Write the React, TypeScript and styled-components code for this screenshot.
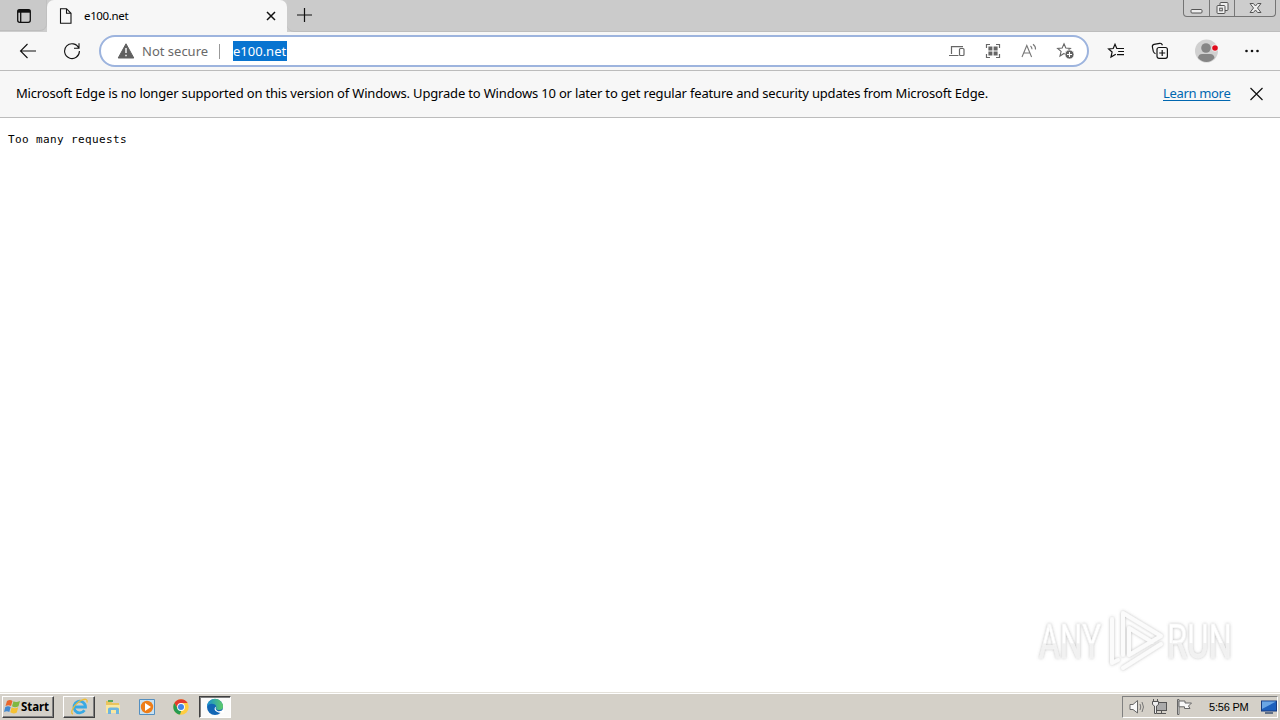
import React from "react";
import styled, { createGlobalStyle } from "styled-components";

const Global = createGlobalStyle`
  * { box-sizing: border-box; }
  html, body { margin: 0; padding: 0; overflow: hidden; }
  svg { display: block; flex: none; }
`;

const Screen = styled.div`
  width: 1280px; height: 720px; display: flex; flex-direction: column;
  background: #fff; color: #000; overflow: hidden;
  font-family: "Noto Sans", "Open Sans", sans-serif;
`;

const TabStrip = styled.div`
  height: 32px; flex: none; display: flex; background: #cdcdcd;
`;
const TabActions = styled.div`
  width: 47px; height: 31px; padding: 8px 0 0 16px; background: #c9c9c9;
  border-radius: 0 0 7px 0; border-right: 1px solid #c0c0c0; border-bottom: 1px solid #bdbdbd;
`;
const Tab = styled.div`
  width: 240px; height: 32px; display: flex; align-items: center; background: #f7f7f7;
  border-radius: 7px 7px 0 0; padding: 0 10px 0 11px;
`;
const Label = styled.span<{ $size: number; $spacing?: number; $color?: string }>`
  font-size: ${p => p.$size}px; letter-spacing: ${p => p.$spacing ?? 0}px;
  color: ${p => p.$color ?? "#000"}; white-space: nowrap; line-height: 18px;
`;
const TabTitle = styled(Label)` flex: 1; margin-left: 11px; `;
const SecurityLabel = styled(Label)` margin-left: 7px; width: 66px; `;
const StripRest = styled.div`
  flex: 1; height: 31.5px; display: flex; padding-left: 9px; align-items: center;
  border-bottom: 1px solid #bdbdbd; border-radius: 0 0 0 7px; background: #cbcbcb;
`;
const WindowButtons = styled.div`
  margin-left: auto; margin-right: 4px; align-self: flex-start; width: 93px; height: 17px; display: flex;
  border: 1px solid #747474; border-top: 0; border-radius: 0 0 4px 4px; background: #cdcdcd;
`;
const WindowButton = styled.div<{ $width: number }>`
  width: ${p => p.$width}px; display: flex; align-items: center; justify-content: center;
  & + & { border-left: 1px solid #777; }
`;

const Toolbar = styled.div`
  height: 39px; flex: none; display: flex; align-items: center; background: #f7f7f7;
  border-bottom: 1px solid #bcbcbc; padding-left: 19px;
`;
const NavButton = styled.div<{ $gap: number }>`
  width: 18px; margin-right: ${p => p.$gap}px;
`;
const AddressBar = styled.div`
  width: 990px; height: 32px; display: flex; align-items: center; background: #fff;
  border: 2px solid #9db4de; border-radius: 16px; padding: 0 12px 0 16px;
`;
const Divider = styled.i` width: 1px; height: 15px; background: #999; margin: 0 13px 0 11px; `;
const Selected = styled.span`
  height: 20px; width: 54px; background: #0874d0; display: flex; align-items: center;
`;
const AddressIcons = styled.div` margin-left: auto; display: flex; gap: 18px; align-items: center; `;
const ToolIcons = styled.div` display: flex; align-items: center; margin-left: 18px; `;
const ToolIcon = styled.div<{ $gap: number }>` margin-right: ${p => p.$gap}px; `;

const Notice = styled.div`
  height: 47px; flex: none; display: flex; align-items: center; background: #f7f7f7;
  border-bottom: 1px solid #bcbcbc; padding: 0 17px 0 16px;
`;
const NoticeText = styled(Label)` padding-bottom: 2px; `;
const Link = styled.a`
  margin-left: auto; margin-right: 20px; font-size: 13px; line-height: 18px; color: #0067b0; padding-bottom: 2px;
  width: 67px; white-space: nowrap; letter-spacing: -0.33px; text-decoration: underline; text-underline-offset: 2px;
`;
const Page = styled.main`
  flex: 1; display: flex; flex-direction: column; padding: 14px 8px 0;
`;
const Pre = styled.pre`
  margin: 0; font: 11px/16px "DejaVu Sans Mono", monospace; letter-spacing: 0.38px;
`;
const Watermark = styled.div` margin: auto 22px 16px auto; `;

const Taskbar = styled.footer`
  height: 28px; flex: none; display: flex; align-items: center; background: #d4d0c8;
  border-top: 1px solid #e4e1da; box-shadow: inset 0 1px #fff; padding: 1px 2px 0;
`;
const TaskButton = styled.div<{ $width: number; $kind?: "raised" | "pressed"; $gap?: number }>`
  width: ${p => p.$width}px; height: 22px; margin-left: ${p => p.$gap ?? 0}px;
  display: flex; align-items: center; justify-content: center;
  background: ${p => (p.$kind === "pressed" ? "#fbfbfa" : "#d4d0c8")};
  border: ${p => (p.$kind ? "1px solid" : "0")};
  border-color: ${p => (p.$kind === "pressed" ? "#404040 #fff #fff #404040" : "#fff #404040 #404040 #fff")};
  box-shadow: ${p => p.$kind === "raised" ? "inset -1px -1px #808080" : p.$kind === "pressed" ? "inset 1px 1px #808080" : "none"};
`;
const StartText = styled.b`
  font: bold 11.5px/16px "Noto Sans", sans-serif; letter-spacing: -0.1px; width: 31px; padding-bottom: 1px;
`;
const Tray = styled.div`
  margin-left: auto; width: 156px; height: 22px; display: flex; align-items: center; padding: 0 3px 0 5px;
  border: 1px solid; border-color: #808080 #fff #fff #808080;
`;
const Clock = styled.span`
  margin: 0 11px 0 15px; width: 40px; white-space: nowrap; font: 11px/16px "Liberation Sans", sans-serif; letter-spacing: -0.2px;
`;

const Star = "M8 1.8 9.8 6 14.4 6.4 10.9 9.4 12 14 8 11.5 4 14 5.1 9.4 1.6 6.4 6.2 6Z";

const Stroke = ({ d, w = 16, h = 16, c = "#111", s = 1.2 }: { d: string; w?: number; h?: number; c?: string; s?: number }) => (
  <svg width={w} height={h} viewBox={`0 0 ${w} ${h}`} fill="none" stroke={c} strokeWidth={s}><path d={d} /></svg>
);

const AnyRunMark = () => (
  <svg width="216" height="72" viewBox="0 0 216 72">
    <defs>
      <linearGradient id="fade" x1="0" y1="0" x2="0" y2="1">
        <stop offset="0.53" stopColor="#fff" /><stop offset="0.54" stopColor="#f1f1f1" />
      </linearGradient>
      <filter id="soft" x="-10%" y="-10%" width="120%" height="120%">
        <feDropShadow dx="0" dy="0" stdDeviation="1.8" floodColor="#777" floodOpacity="0.5" />
      </filter>
    </defs>
    <g filter="url(#soft)" fill="url(#fade)" stroke="#f4f4f4" strokeWidth="0.6" fontFamily="Roboto, sans-serif" fontSize="49">
      <text transform="translate(5 54) scale(0.65 1)">ANY</text>
      <text transform="translate(133 54) scale(0.67 1)">RUN</text>
    </g>
    <g filter="url(#soft)" fill="none" stroke="#fbfbfb" strokeWidth="4" strokeLinejoin="round" strokeLinecap="round">
      <path d="M89 51V9L127 32 95 51V24L118 38M78 15V59L84 56M89 64 127 40" />
    </g>
  </svg>
);

export default function App() {
  return (
    <Screen>
      <Global />
      <TabStrip>
        <TabActions>
          <svg width="16" height="16" viewBox="0 0 16 16" fill="none" stroke="#111" strokeWidth="1.3">
            <rect x="1.7" y="1.7" width="12.6" height="12.6" rx="2" /><path d="M1.7 3.2h12.6" strokeWidth="3" /><path d="M4.7 4v10" />
          </svg>
        </TabActions>
        <Tab>
          <Stroke w={15} d="M2.5 .7H8.5L13 5.3V15.3H2.5ZM8.5 .7V5.3H13" s={1.1} />
          <TabTitle $size={11.5} $spacing={-0.35}>e100.net</TabTitle>
          <Stroke w={12} h={12} d="M2 2 10 10M10 2 2 10" s={1.5} />
        </Tab>
        <StripRest>
          <Stroke d="M8.5 1V15M1 8H16" s={1.2} />
          <WindowButtons>
            <WindowButton $width={25}>
              <svg width="13" height="14"><rect x="1" y="8.5" width="11" height="3.5" rx="1" fill="#eee" stroke="#555" /></svg>
            </WindowButton>
            <WindowButton $width={25}>
              <svg width="13" height="14" fill="#eee" stroke="#555"><rect x="4" y="1.5" width="8" height="8" rx="1" /><rect x="1" y="4.5" width="8" height="8" rx="1" /><rect x="3.7" y="7.2" width="2.6" height="2.6" /></svg>
            </WindowButton>
            <WindowButton $width={41}>
              <svg width="13" height="14"><path d="M1 2.5h3.4L6.5 5 8.6 2.5H12L8.5 7 12 11.5H8.6L6.5 9 4.4 11.5H1L4.5 7Z" fill="#eee" stroke="#555" /></svg>
            </WindowButton>
          </WindowButtons>
        </StripRest>
      </TabStrip>

      <Toolbar>
        <NavButton $gap={26}><Stroke w={18} h={18} d="M17 9H1.5M8.5 2 1.5 9 8.5 16" s={1.1} /></NavButton>
        <NavButton $gap={18}><Stroke w={18} h={18} d="M15.8 6.2A7.4 7.4 0 1 0 16.4 9M16 1.3V6.3H11" s={1.1} /></NavButton>
        <AddressBar>
          <svg width="18" height="16" viewBox="0 0 18 16"><path d="M9 .8 16.8 15H1.2Z" fill="#606060" stroke="#606060" strokeLinejoin="round" /><path d="M9 5v5M9 11.7v1.6" stroke="#fff" strokeWidth="1.4" /></svg>
          <SecurityLabel $size={13} $color="#696969">Not secure</SecurityLabel>
          <Divider />
          <Selected><Label $size={13} $color="#fff">e100.net</Label></Selected>
          <AddressIcons>
            <svg width="18" height="16" fill="none" stroke="#666" strokeWidth="1.2"><path d="M3.5 11V3.6H15M1 12.5H10.5" /><rect x="11.5" y="5.5" width="4.5" height="7" rx="1" /></svg>
            <svg width="18" height="16" fill="none" stroke="#666" strokeWidth="1.2"><path d="M2.5 5V1.5H6M12 1.5H15.5V5M15.5 11V14.5H12M6 14.5H2.5V11" /><path d="M4.4 3.4h4v4H4.4zM9.6 3.4h4v4H9.6zM4.4 8.6h4v4H4.4zM9.6 8.6h4v4H9.6z" fill="#666" stroke="none" /></svg>
            <svg width="18" height="16" fill="none" stroke="#777" strokeWidth="1.1"><path d="M2 14 6.8 2.5 11.6 14M3.6 10H10M10.5 3Q12 4.3 12 6.2M13 1.2Q15.8 3.3 15.5 6.5" /></svg>
            <svg width="19" height="18" viewBox="0 0 19 18" fill="none" stroke="#666" strokeWidth="1.1"><path d={Star} /><circle cx="13.5" cy="12.5" r="4.5" fill="#606060" stroke="#fff" strokeWidth=".7" /><path d="M11 12.5h5M13.5 10v5" stroke="#fff" /></svg>
          </AddressIcons>
        </AddressBar>
        <ToolIcons>
          <ToolIcon $gap={26}>
            <svg width="18" height="18" viewBox="0 0 18 18" fill="none" stroke="#111" strokeWidth="1.2"><path d="M8.8 12.2 4 15 5.1 10 1.6 7 6.2 6.5 8 2.3 9.8 6.5H17M11.2 9.5H17M10 12.6H17" /></svg>
          </ToolIcon>
          <ToolIcon $gap={25}>
            <svg width="18" height="18" viewBox="0 0 18 18" fill="none" stroke="#111" strokeWidth="1.2"><path d="M4.5 11.8Q2.8 11 2.3 9.4L1.4 5Q1 3 3 2.4L8.7 1.3Q10.6 1 11.5 3.2" /><rect x="6" y="5.5" width="10.4" height="10.8" rx="2" /><path d="M11.2 8v6M8.2 11h6" /></svg>
          </ToolIcon>
          <ToolIcon $gap={24}>
            <svg width="26" height="24" viewBox="0 0 26 24"><circle cx="12.5" cy="12" r="11.5" fill="#d0d0d0" /><circle cx="12" cy="9" r="4.8" fill="#858585" /><path d="M4 19Q4.5 15.2 8 15H16Q20 15.2 20.5 19Q17 23 12.5 23T4 19" fill="#858585" /><circle cx="21" cy="9" r="3.4" fill="#f7f7f7" /><circle cx="21" cy="9" r="2.8" fill="#e00b1c" /></svg>
          </ToolIcon>
          <svg width="16" height="6" fill="#111"><circle cx="2.5" cy="3" r="1.3" /><circle cx="8" cy="3" r="1.3" /><circle cx="13.5" cy="3" r="1.3" /></svg>
        </ToolIcons>
      </Toolbar>

      <Notice>
        <NoticeText $size={13} $spacing={-0.175}>Microsoft Edge is no longer supported on this version of Windows. Upgrade to Windows 10 or later to get regular feature and security updates from Microsoft Edge.</NoticeText>
        <Link>Learn more</Link>
        <Stroke w={13} h={14} d="M.5 1 12.5 13M12.5 1 .5 13" s={1.2} />
      </Notice>

      <Page>
        <Pre>Too many requests</Pre>
        <Watermark><AnyRunMark /></Watermark>
      </Page>

      <Taskbar>
        <TaskButton $width={52} $kind="raised">
          <svg width="17" height="16" viewBox="0 0 17 16"><path d="M3 2Q6 0 8.5 2L7 7Q4.5 5.5 1.5 7Z" fill="#e9672c" /><path d="M9.5 2.3Q12 4 16 2L14.5 7.3Q11 9 8 7.3Z" fill="#7fb842" /><path d="M1.3 8Q4 6.5 6.7 8L5.3 13Q3 11.5 0 13Z" fill="#4289d0" /><path d="M7.7 8.3Q10.5 10 14.2 8.3L12.8 13.5Q9.5 15.5 6.3 13.3Z" fill="#f5c132" /></svg>
          <StartText>Start</StartText>
        </TaskButton>
        <TaskButton $width={32} $kind="raised" $gap={9}>
          <svg width="19" height="18" viewBox="0 0 19 18" fill="none"><path d="M14.5 12.3A5.8 5.8 0 1 1 15.5 9H5" stroke="#38a9e4" strokeWidth="2.8" /><path d="M3 16C-1 15 5 5 12 2Q18-.3 17 4.5" stroke="#efbd35" strokeWidth="1.3" /></svg>
        </TaskButton>
        <TaskButton $width={32} $gap={2}>
          <svg width="18" height="18" viewBox="0 0 18 18"><path d="M2 3H7L8 5H15V15H2Z" fill="#e9c45d" /><path d="M4 2h5v2H4z" fill="#57a85c" /><path d="M2 7H16V15H2Z" fill="#f9e7a0" /><path d="M4 16V11Q4 9.5 6 9.5H13Q15 9.5 15 11V16H12V12H7V16Z" fill="#6db5df" /></svg>
        </TaskButton>
        <TaskButton $width={32} $gap={2}>
          <svg width="18" height="18" viewBox="0 0 18 18"><path d="M1.5 1.5H16.5V16.5H1.5Z" fill="#c8e1f2" stroke="#548fc0" /><circle cx="9" cy="9" r="6.2" fill="#ee7d18" /><path d="M7 5 13 9 7 13Z" fill="#fff" /></svg>
        </TaskButton>
        <TaskButton $width={32} $gap={2}>
          <svg width="18" height="18" viewBox="0 0 18 18"><circle cx="9" cy="9" r="7.7" fill="#ffcd40" /><path d="M2.3 5.1A7.7 7.7 0 0 1 15.7 5.1H9L6 11Z" fill="#e33b2e" /><path d="M2.3 5.1 6 11H9.8L8 16.6A7.7 7.7 0 0 1 2.3 5.1" fill="#269b51" /><circle cx="9" cy="9" r="3.9" fill="#fff" /><circle cx="9" cy="9" r="3" fill="#4285e8" /></svg>
        </TaskButton>
        <TaskButton $width={32} $kind="pressed" $gap={2}>
          <svg width="18" height="18" viewBox="0 0 18 18">
            <defs><linearGradient id="wave" x1="0" y1="0" x2="1" y2="0"><stop stopColor="#1890d4" /><stop offset="1" stopColor="#5dcc66" /></linearGradient></defs>
            <circle cx="9" cy="9" r="8" fill="#1266b5" /><path d="M1 9A8 8 0 0 1 17 8.5Q17 12 13 12 9.5 12 10.3 9.8 10.8 7 7.5 6 3 5 1 9" fill="url(#wave)" /><path d="M10.3 8.5Q8.5 11 11.5 13 14 14 18 11.5V15L15 15Q9 14 8.5 11 8.5 9 10.3 8.5" fill="#fff" />
          </svg>
        </TaskButton>
        <Tray>
          <svg width="20" height="18" viewBox="0 0 20 18" fill="#f8f8f8" stroke="#666"><path d="M2 6.5H5L9.5 2.5V15L5 11.5H2Z" /><path d="M12 6Q13.5 9 12 12M14 4Q17 9 14 14" fill="none" stroke="#777" /></svg>
          <svg width="26" height="18" viewBox="0 0 26 18" fill="#eee" stroke="#555"><rect x="8.5" y="4.5" width="10" height="8" fill="#aaa" /><path d="M9 15.5H18M13.5 12.5V15" /><path d="M5.5 1V3M9.5 1V3M4.5 3.5H10.5V6.5L8.5 8V15.5H6.5V8L4.5 6.5Z" /></svg>
          <svg width="20" height="18" viewBox="0 0 20 18" fill="#f8f8f8" stroke="#666"><path d="M3.5 1.5H5V16.5H3.5Z" /><path d="M5 3H11V5H17.5L14.5 8 16 10.5H10.5V8.8H5Z" /></svg>
          <Clock>5:56 PM</Clock>
          <svg width="18" height="18" viewBox="0 0 18 18"><rect x="1.5" y="3" width="15" height="10" fill="#1d60bd" stroke="#183c80" /><path d="M2 3.5H16L2 11Z" fill="#6aa6e5" /><path d="M5 15H13" stroke="#3b5273" strokeWidth="1.5" /></svg>
        </Tray>
      </Taskbar>
    </Screen>
  );
}
